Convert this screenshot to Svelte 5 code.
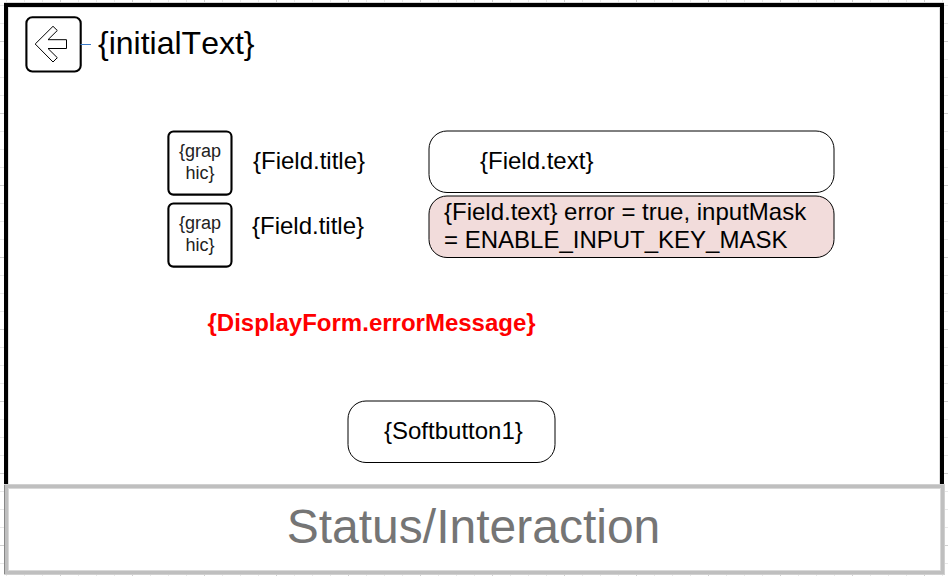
<script>
  const rows = [
    { graphic: ['{grap', 'hic}'], title: '{Field.title}', lines: ['{Field.text}'], error: false },
    {
      graphic: ['{grap', 'hic}'],
      title: '{Field.title}',
      lines: ['{Field.text} error = true, inputMask', '= ENABLE_INPUT_KEY_MASK'],
      error: true
    }
  ];
</script>

<div class="canvas">
  <main class="screen">
    <header>
      <svg class="back" width="68" height="60" viewBox="24 14 68 60" aria-label="Back">
        <rect x="26.4" y="17.3" width="54.3" height="54.2" rx="6" fill="#fff" stroke="#000" stroke-width="2.1" />
        <path d="M35.2 44 53 26.3 57.3 30.5 48 39.7H66.5V48.5H48L57.3 57.7 53 62Z" fill="none" stroke="#000" stroke-width="1" />
        <path d="M80.5 44.5H91" stroke="#3a7bc8" stroke-width="1" />
      </svg>
      <h1>{'{initialText}'}</h1>
    </header>

    <section class="form">
      {#each rows as row}
        <div class="row" class:error={row.error}>
          <div class="graphic">
            <svg width="66" height="66">
              <rect x="1.4" y="1.5" width="63.1" height="63.1" rx="5" fill="#fff" stroke="#000" stroke-width="2.1" />
            </svg>
            <div class="caption">
              {#each row.graphic as part}<span>{part}</span>{/each}
            </div>
          </div>
          <div class="title">{row.title}</div>
          <div class="field">
            <svg width="407" height="64">
              <rect x="1" y="1" width="405" height="61.5" rx="18" fill={row.error ? '#f2dcdb' : '#fff'} stroke="#000" stroke-width="1" />
            </svg>
            <div class="value">
              {#each row.lines as line}<span>{line}</span>{/each}
            </div>
          </div>
        </div>
      {/each}
    </section>

    <p class="message">{'{DisplayForm.errorMessage}'}</p>

    <div class="soft">
      <svg width="209" height="64">
        <rect x="1" y="1" width="207" height="61.5" rx="18" fill="#fff" stroke="#000" stroke-width="1" />
      </svg>
      <span>{'{Softbutton1}'}</span>
    </div>
  </main>
  <footer><span>Status/Interaction</span></footer>
</div>

<style>
  :global(body) {
    background: #fff;
  }
  .canvas {
    box-sizing: border-box;
    width: 948px;
    height: 576px;
    padding: 3px 0 0 4px;
    overflow: hidden;
    font-family: 'Liberation Sans', Arial, sans-serif;
    color: #000;
    background-color: #fff;
    background-image:
      linear-gradient(90deg, #d0d0d0 1px, transparent 1px),
      linear-gradient(#d0d0d0 1px, transparent 1px),
      linear-gradient(90deg, #e8e8e8 1px, transparent 1px),
      linear-gradient(#e8e8e8 1px, transparent 1px);
    background-size: 72px 72px, 72px 72px, 18px 18px, 18px 18px;
    background-position: 60px 0, 0 41px, 6px 0, 0 5px;
  }
  .screen {
    box-sizing: border-box;
    width: 940px;
    height: 482px;
    border: 4px solid #000;
    border-bottom: 0;
    background: #fff;
    display: flex;
    flex-direction: column;
    align-items: flex-start;
    box-shadow: 0 -1px 0 0 #d8d8d8, inset 0 0 0 1px #e0e0e0;
  }
  svg {
    display: block;
    flex: none;
  }
  header {
    display: flex;
    height: 60px;
    padding: 7px 0 0 16px;
  }
  h1 {
    margin: 0 0 0 6px;
    font-size: 32px;
    font-weight: 400;
    line-height: 58px;
    font-kerning: none;
  }
  .form {
    padding: 56px 0 0 159px;
  }
  .row {
    display: flex;
    height: 72px;
    align-items: flex-start;
    font-size: 24px;
    line-height: 28px;
    white-space: nowrap;
  }
  .graphic {
    display: grid;
    width: 66px;
  }
  .graphic > *,
  .field > *,
  .soft > * {
    grid-area: 1 / 1;
  }
  .caption {
    display: flex;
    flex-direction: column;
    align-items: center;
    padding-top: 10px;
    font-size: 18px;
    line-height: 22px;
    color: #222;
  }
  .title {
    width: 175px;
    margin: 17px 0 0 20px;
  }
  .error .title {
    width: 176px;
    margin: 10px 0 0 19px;
  }
  .field {
    display: grid;
    width: 407px;
  }
  .error .field {
    margin-top: -7px;
  }
  .value {
    display: flex;
    flex-direction: column;
    padding: 17px 0 0 52px;
  }
  .error .value {
    padding: 3px 0 0 16px;
  }
  .message {
    margin: 35px 0 0 199.5px;
    font-size: 24px;
    font-weight: 700;
    line-height: 28px;
    color: #f00;
  }
  .soft {
    display: grid;
    margin: 63px 0 0 339px;
    font-size: 24px;
    line-height: 28px;
  }
  .soft span {
    padding: 17px 0 0 37px;
  }
  footer {
    box-sizing: border-box;
    width: 939px;
    height: 89px;
    margin-left: 1px;
    padding-right: 2px;
    border: 3px solid #bfbfbf;
    background: #fff;
    box-shadow: inset 0 0 0 1px #d8d8d8, -1px 0 0 0 #888, 0 0 0 1px #d0d0d0;
    text-align: center;
    font-size: 48px;
    line-height: 77px;
    color: #757575;
  }
</style>
